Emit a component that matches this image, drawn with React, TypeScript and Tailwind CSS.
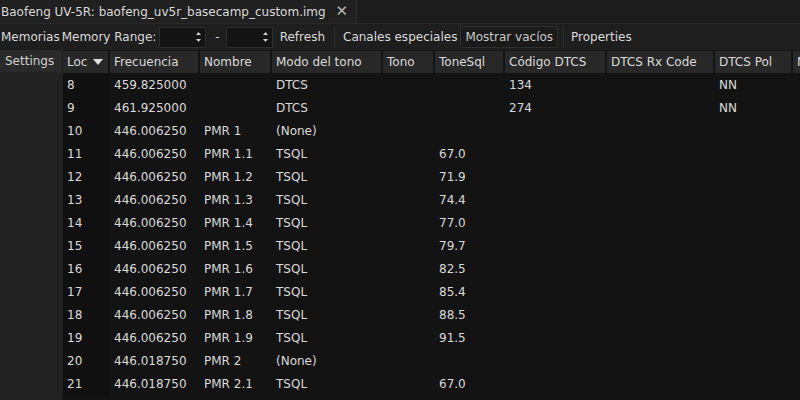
import { ReactNode } from 'react'

const COLS = [
  { label: 'Loc', w: 47 },
  { label: 'Frecuencia', w: 90 },
  { label: 'Nombre', w: 72 },
  { label: 'Modo del tono', w: 111 },
  { label: 'Tono', w: 52 },
  { label: 'ToneSql', w: 70 },
  { label: 'Código DTCS', w: 102 },
  { label: 'DTCS Rx Code', w: 108 },
  { label: 'DTCS Pol', w: 78 },
  { label: 'Modo', w: 80 },
]

const ROWS: string[][] = [
  ['8', '459.825000', '', 'DTCS', '', '', '134', '', 'NN'],
  ['9', '461.925000', '', 'DTCS', '', '', '274', '', 'NN'],
  ['10', '446.006250', 'PMR 1', '(None)', '', '', '', '', ''],
  ['11', '446.006250', 'PMR 1.1', 'TSQL', '', '67.0', '', '', ''],
  ['12', '446.006250', 'PMR 1.2', 'TSQL', '', '71.9', '', '', ''],
  ['13', '446.006250', 'PMR 1.3', 'TSQL', '', '74.4', '', '', ''],
  ['14', '446.006250', 'PMR 1.4', 'TSQL', '', '77.0', '', '', ''],
  ['15', '446.006250', 'PMR 1.5', 'TSQL', '', '79.7', '', '', ''],
  ['16', '446.006250', 'PMR 1.6', 'TSQL', '', '82.5', '', '', ''],
  ['17', '446.006250', 'PMR 1.7', 'TSQL', '', '85.4', '', '', ''],
  ['18', '446.006250', 'PMR 1.8', 'TSQL', '', '88.5', '', '', ''],
  ['19', '446.006250', 'PMR 1.9', 'TSQL', '', '91.5', '', '', ''],
  ['20', '446.018750', 'PMR 2', '(None)', '', '', '', '', ''],
  ['21', '446.018750', 'PMR 2.1', 'TSQL', '', '67.0', '', '', ''],
]

function SpinBox() {
  return (
    <div className="flex h-[21px] w-[47px] items-center justify-end border border-[#2e2e2e] bg-[#141414] pr-[3px]">
      <svg width="7" height="14" viewBox="0 0 7 14">
        <path d="M3.5 2 L6 5 L1 5 Z" fill="#d0d0d0" />
        <path d="M3.5 12 L6 9 L1 9 Z" fill="#d0d0d0" />
      </svg>
    </div>
  )
}

function Sep() {
  return <div className="mx-[4px] h-[22px] w-px bg-[#2c2c2c]" />
}

function Cell({ w, children, dark }: { w: number; children?: ReactNode; dark?: boolean }) {
  return (
    <div
      className={`flex h-[23px] shrink-0 items-center px-[4px] ${dark ? 'bg-[#101010]' : ''}`}
      style={{ width: w }}
    >
      {children}
    </div>
  )
}

export default function App() {
  return (
    <div
      className="flex h-[400px] w-[800px] flex-col overflow-hidden bg-[#1e1e1e] text-[12px] text-[#dadada]"
      style={{ fontFamily: '"DejaVu Sans", sans-serif' }}
    >
      {/* tab bar */}
      <div className="flex h-[24px] border-b border-[#2a2a2a] bg-[#1c1c1c]">
        <div className="flex w-[357px] items-center gap-[10px] border-r border-[#2e2e2e] bg-[#202020] pl-[1px]">
          <span className="whitespace-nowrap">Baofeng UV-5R: baofeng_uv5r_basecamp_custom.img</span>
          <span className="text-[15px] leading-none text-[#b8b8b8]">✕</span>
        </div>
      </div>

      {/* toolbar */}
      <div className="flex h-[26px] items-center bg-[#1e1e1e] pl-[1px]">
        <span>Memorias</span>
        <span className="ml-[2px]">Memory Range:</span>
        <div className="ml-[3px]">
          <SpinBox />
        </div>
        <span className="ml-[9px] mr-[6px]">-</span>
        <SpinBox />
        <span className="ml-[7px]">Refresh</span>
        <div className="ml-[5px]">
          <Sep />
        </div>
        <span className="ml-[4px]">Canales especiales</span>
        <div className="ml-[3px] flex h-[22px] items-center rounded-[2px] border border-[#2e2e2e] bg-[#1a1a1a] px-[4px] text-[#c8c8c8]">
          Mostrar vacíos
        </div>
        <div className="ml-[1px]">
          <Sep />
        </div>
        <span className="ml-[3px]">Properties</span>
      </div>

      {/* body */}
      <div className="flex min-h-0 flex-1">
        <div className="flex w-[62px] shrink-0 flex-col bg-[#222222]">
          <div className="flex h-[22px] items-center bg-[#2a2a2a] pl-[5px] text-[#d0d0d0]">Settings</div>
        </div>
        <div className="ml-px flex min-w-0 flex-1 flex-col overflow-hidden bg-[#131313] pt-[1px]">
          <div className="flex h-[22px] gap-[2px] bg-[#131313]">
            {COLS.map((c, i) => (
              <div
                key={c.label}
                className="flex h-[22px] shrink-0 items-center gap-[6px] overflow-hidden whitespace-nowrap bg-[#282828] pl-[4px]"
                style={{ width: c.w - 2 }}
              >
                {c.label}
                {i === 0 && (
                  <svg width="10" height="6" viewBox="0 0 10 6">
                    <path d="M0 0 L10 0 L5 6 Z" fill="#e0e0e0" />
                  </svg>
                )}
              </div>
            ))}
          </div>
          <div className="flex flex-col">
            {ROWS.map((r) => (
              <div key={r[0]} className="flex whitespace-nowrap">
                {COLS.slice(0, 9).map((c, i) => (
                  <Cell key={i} w={c.w} dark={i === 0}>
                    {r[i]}
                  </Cell>
                ))}
              </div>
            ))}
          </div>
        </div>
      </div>
    </div>
  )
}
